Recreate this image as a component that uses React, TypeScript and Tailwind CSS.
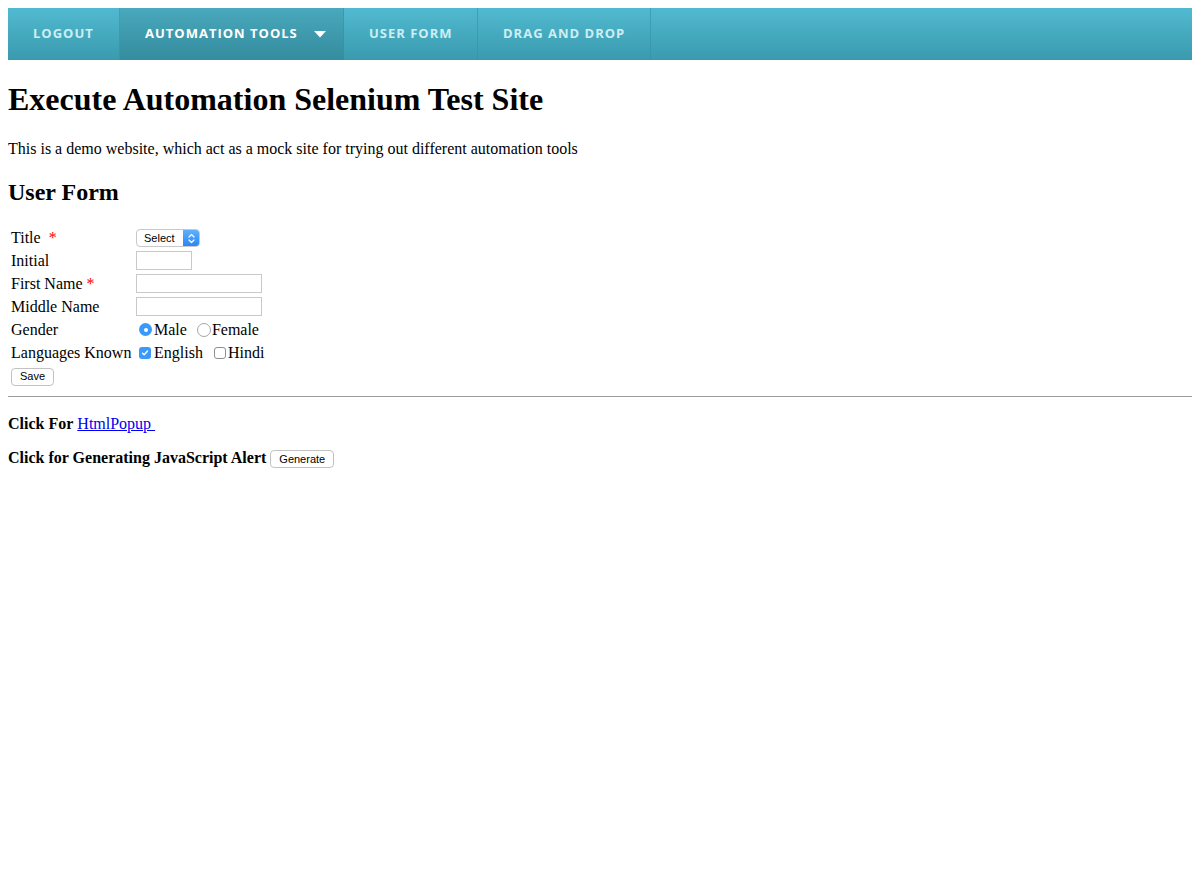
const navItems = [
  { label: 'Logout', width: 'w-[112px]', active: false, caret: false },
  { label: 'Automation Tools', width: 'w-[224px]', active: true, caret: true },
  { label: 'User Form', width: 'w-[134px]', active: false, caret: false },
  { label: 'Drag and Drop', width: 'w-[173px]', active: false, caret: false },
]

const Radio = ({ checked }: { checked?: boolean }) =>
  checked ? (
    <span className="flex h-[13px] w-[13px] items-center justify-center rounded-full bg-[#3b99fc]">
      <span className="block h-[4px] w-[4px] rounded-full bg-white" />
    </span>
  ) : (
    <span className="block h-[14px] w-[14px] rounded-full border border-[#a6a6a6] bg-white" />
  )

const Checkbox = ({ checked }: { checked?: boolean }) =>
  checked ? (
    <span className="flex h-[12px] w-[12px] items-center justify-center rounded-[3px] bg-[#3b99fc]">
      <svg width="8" height="8" viewBox="0 0 8 8" fill="none">
        <path d="M1.5 4.2 L3.2 5.8 L6.5 2" stroke="white" strokeWidth="1.4" strokeLinecap="round" strokeLinejoin="round" />
      </svg>
    </span>
  ) : (
    <span className="block h-[12px] w-[12px] rounded-[3px] border border-[#8e8e8e] bg-white" />
  )

const Button = ({ children }: { children: React.ReactNode }) => (
  <span className="inline-flex h-[18px] items-center rounded-[4px] border border-[#c2c2c2] bg-white px-[8px] align-middle font-['Liberation_Sans',sans-serif] text-[11px] text-black">
    {children}
  </span>
)

const Row = ({ label, children }: { label: React.ReactNode; children: React.ReactNode }) => (
  <div className="flex h-[21px] items-center">
    <div className="w-[128px] pl-[3px]">{label}</div>
    <div className="flex items-center">{children}</div>
  </div>
)

export default function App() {
  return (
    <div className="min-h-[890px] bg-white p-2 font-['Liberation_Serif',serif] text-base text-black">
      {/* Top Nav */}
      <nav className="flex h-[52px] bg-gradient-to-b from-[#51bad0] to-[#3a9aae] font-['Open_Sans',sans-serif] text-[13px] font-bold uppercase tracking-[1px]">
        {navItems.map((item) => (
          <a
            key={item.label}
            className={`flex h-full items-center border-r border-[#3591a5]/60 pl-[25px] ${item.width} ${
              item.active ? 'bg-black/[0.09] text-white' : 'text-[#cdeef3]'
            }`}
          >
            {item.label}
            {item.caret && (
              <svg className="ml-[16px]" width="12" height="7" viewBox="0 0 12 7">
                <path d="M0 0 L12 0 L6 6.5 Z" fill="white" />
              </svg>
            )}
          </a>
        ))}
      </nav>

      <h1 className="mt-[21px] mb-[22px] text-[32px] font-bold leading-[37px]">
        Execute Automation Selenium Test Site
      </h1>
      <p className="leading-[18px]">
        This is a demo website, which act as a mock site for trying out different automation tools
      </p>
      <h2 className="mt-[20px] text-2xl font-bold leading-[28px]">User Form</h2>

      {/* User Form */}
      <div className="mt-[21px] flex flex-col gap-[2px]">
        <Row
          label={
            <>
              Title&nbsp; <span className="text-[#ff0000]">*</span>
            </>
          }
        >
          <span className="mt-[1px] flex h-[18px] w-[64px] items-stretch overflow-hidden rounded-[4px] border border-[#c8c8c8] bg-white">
            <span className="flex flex-1 items-center pl-[7px] font-['Liberation_Sans',sans-serif] text-[11px]">Select</span>
            <span className="flex w-[16px] items-center justify-center bg-gradient-to-b from-[#5fb0fc] to-[#2a86f7]">
              <svg width="7" height="11" viewBox="0 0 7 11" fill="none">
                <path d="M1 4 L3.5 1.5 L6 4 M1 7 L3.5 9.5 L6 7" stroke="white" strokeWidth="1.2" strokeLinecap="round" strokeLinejoin="round" />
              </svg>
            </span>
          </span>
        </Row>
        <Row label="Initial">
          <span className="h-[19px] w-[56px] border border-[#c9c9c9] bg-white" />
        </Row>
        <Row
          label={
            <>
              First Name <span className="text-[#ff0000]">*</span>
            </>
          }
        >
          <span className="h-[19px] w-[126px] border border-[#c9c9c9] bg-white" />
        </Row>
        <Row label="Middle Name">
          <span className="h-[19px] w-[126px] border border-[#c9c9c9] bg-white" />
        </Row>
        <Row label="Gender">
          <span className="ml-[3px]"><Radio checked /></span>
          <span className="ml-[2px]">Male</span>
          <span className="ml-[10px]"><Radio /></span>
          <span className="ml-[1px]">Female</span>
        </Row>
        <Row label="Languages Known">
          <span className="ml-[3px]"><Checkbox checked /></span>
          <span className="ml-[3px]">English</span>
          <span className="ml-[11px]"><Checkbox /></span>
          <span className="ml-[2px]">Hindi</span>
        </Row>
        <div className="mt-[1px] flex h-[21px] items-center pl-[3px]">
          <Button>Save</Button>
        </div>
      </div>

      <hr className="mt-[9px] border-0 border-t border-t-[#9c9c9c]" />

      <p className="mt-[18px] leading-[18px]">
        <b>Click For</b>{' '}
        <a className="text-[#0000ee] underline">HtmlPopup&nbsp;</a>
      </p>
      <p className="mt-[16px] leading-[18px]">
        <b>Click for Generating JavaScript Alert</b> <Button>Generate</Button>
      </p>
    </div>
  )
}
